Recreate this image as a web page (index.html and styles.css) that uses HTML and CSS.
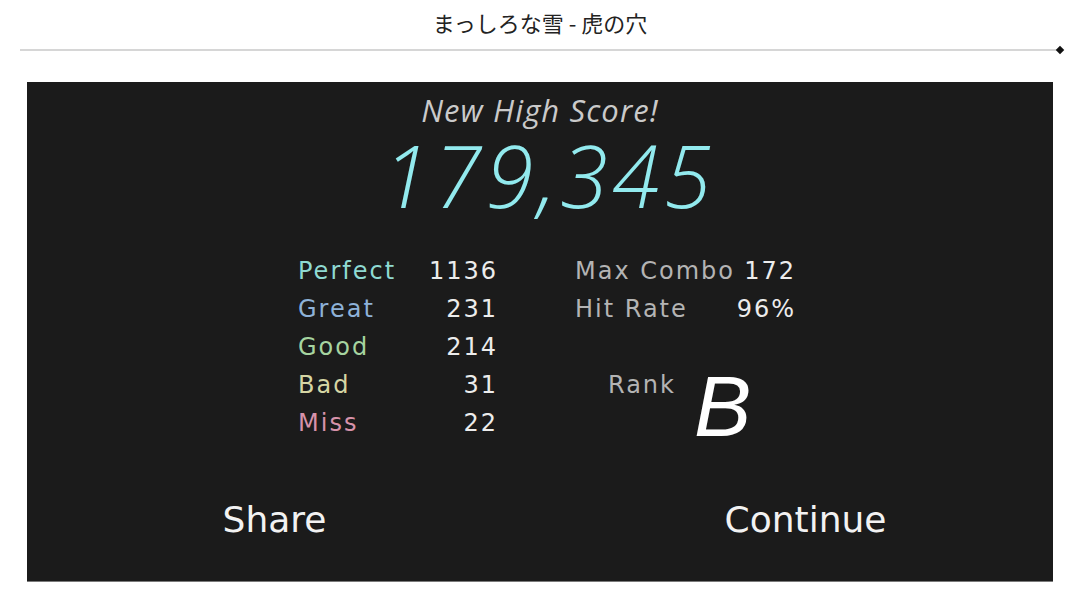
FILE: index.html
```html
<!DOCTYPE html>
<html lang="ja">
<head>
<meta charset="utf-8">
<title>Result</title>
<link rel="stylesheet" href="styles.css">
</head>
<body>
<header class="top">
  <h1 class="song-title">まっしろな雪 - 虎の穴</h1>
  <div class="progress"><span class="progress-knob"></span></div>
</header>
<main class="panel">
  <div class="headline">New High Score!</div>
  <div class="score">179,345</div>
  <section class="stats">
    <div class="judges">
      <span class="label perfect">Perfect</span><span class="val">1136</span>
      <span class="label great">Great</span><span class="val">231</span>
      <span class="label good">Good</span><span class="val">214</span>
      <span class="label bad">Bad</span><span class="val">31</span>
      <span class="label miss">Miss</span><span class="val">22</span>
    </div>
    <div class="summary">
      <div class="summary-grid">
        <span class="label plain">Max Combo</span><span class="val">172</span>
        <span class="label plain">Hit Rate</span><span class="val">96%</span>
      </div>
      <div class="rank-row">
        <span class="label plain">Rank</span>
        <span class="rank">B</span>
      </div>
    </div>
  </section>
  <div class="actions">
    <button class="action">Share</button>
    <button class="action">Continue</button>
  </div>
</main>
</body>
</html>
```
FILE: styles.css
```css
html, body {
  margin: 0;
  padding: 0;
  background: #ffffff;
}
body {
  width: 1080px;
  height: 608px;
  overflow: hidden;
  font-family: "DejaVu Sans", sans-serif;
}
.top {
  padding-top: 7px;
}
.song-title {
  margin: 0;
  font-family: "Noto Sans CJK JP", "Noto Sans", sans-serif;
  font-weight: 400;
  font-size: 22px;
  line-height: 30px;
  color: #222222;
  text-align: center;
}
.progress {
  position: relative;
  margin: 12px 0 0 20px;
  width: 1038px;
  height: 2px;
  background: #d6d6d6;
}
.progress-knob {
  position: absolute;
  right: -5px;
  top: -2px;
  width: 6px;
  height: 6px;
  background: #111111;
  transform: rotate(45deg);
}
.panel {
  margin: 31px 0 0 27px;
  width: 1026px;
  height: 500px;
  box-sizing: border-box;
  background: #1b1b1b;
  border-bottom: 1px solid #7a7a7a;
  padding-top: 10px;
  display: flex;
  flex-direction: column;
}
.headline {
  font-family: "Open Sans", sans-serif;
  font-style: italic;
  font-weight: 400;
  font-size: 31px;
  line-height: 36px;
  letter-spacing: 1.1px;
  color: #cacaca;
  text-align: center;
}
.score {
  margin-top: 5px;
  padding-left: 18px;
  font-family: "Open Sans", sans-serif;
  font-style: italic;
  font-weight: 300;
  font-size: 86px;
  line-height: 84px;
  letter-spacing: 4.5px;
  color: #92eaee;
  text-align: center;
}
.stats {
  margin-top: 35px;
  padding-left: 271px;
  display: flex;
  gap: 77px;
}
.label, .val {
  font-size: 24px;
  line-height: 38px;
  letter-spacing: 2px;
  white-space: nowrap;
}
.val {
  color: #ececec;
  text-align: right;
}
.judges {
  width: 200px;
  display: grid;
  grid-template-columns: 1fr auto;
  grid-auto-rows: 38px;
}
.perfect { color: #8fdad2; }
.great { color: #8eb2d8; }
.good { color: #a6d4a0; }
.bad { color: #d6d6a4; }
.miss { color: #d792aa; }
.plain { color: #b4b4b4; }
.summary {
  width: 221px;
  display: flex;
  flex-direction: column;
}
.summary-grid {
  display: grid;
  grid-template-columns: 1fr auto;
  grid-auto-rows: 38px;
}
.rank-row {
  margin-top: 38px;
  padding-left: 33px;
  display: flex;
  align-items: flex-start;
}
.rank {
  margin: -3px 0 0 18px;
  font-family: "Liberation Sans", sans-serif;
  font-style: italic;
  font-weight: 400;
  font-size: 86px;
  line-height: 86px;
  color: #ffffff;
}
.actions {
  margin-top: 46px;
  display: flex;
  justify-content: center;
  gap: 271px;
}
.action {
  width: 260px;
  padding: 0;
  border: 0;
  background: transparent;
  font-family: "DejaVu Sans", sans-serif;
  font-size: 36px;
  line-height: 50px;
  color: #f2f2f2;
  text-align: center;
  cursor: pointer;
}
```
